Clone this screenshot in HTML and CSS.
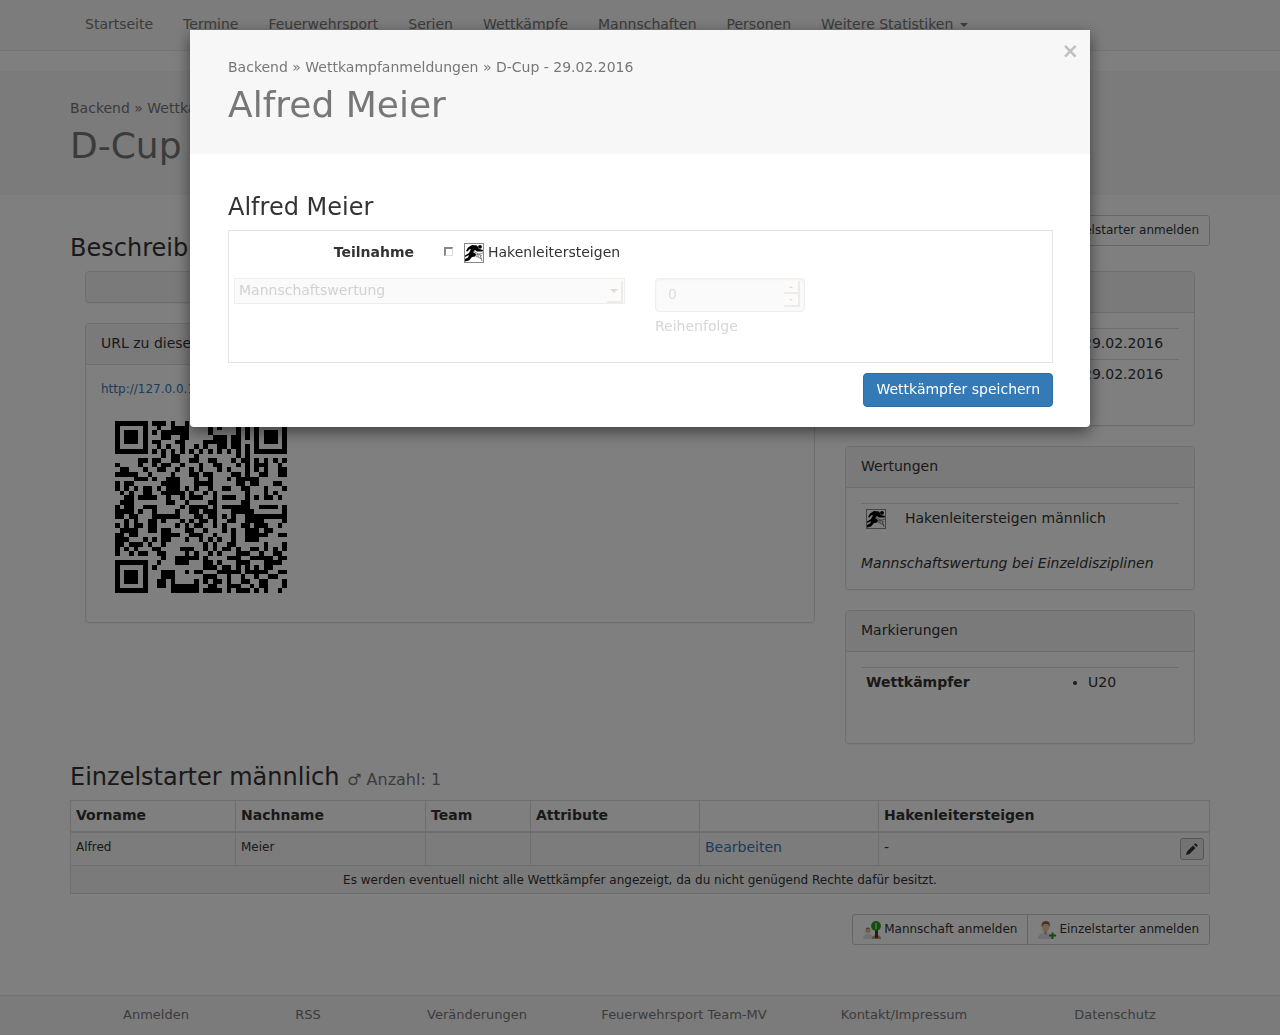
FILE: index.html
```html
<!DOCTYPE html>
<html lang="de">
<head>
<meta charset="utf-8">
<meta name="viewport" content="width=device-width, initial-scale=1">
<title>D-Cup - 29.02.2016</title>
<link rel="stylesheet" href="styles.css">
</head>
<body>
<svg class="sprite" aria-hidden="true">
  <symbol id="runner" viewBox="0 0 20 20">
    <rect x=".5" y=".5" width="19" height="19" fill="#fff" stroke="#888"/>
    <path d="M7 9 12 13 18 16M9 8 18 13M8 13 19 10M14 11v3M16 12 18 18" fill="none" stroke="#888" stroke-width="1"/>
    <circle cx="16" cy="3.800" r="1.900"/>
    <path d="M2 8 4 4.500 8 2 13 2.500 15 6 19 7 18.500 8.500 13 8.500 11 7 9 9 12 11 11 13.500 8 14 5 17.500 1 18.500 1 16 4 14.500 5 12 1 14 1 12.500 5 10 7 6 5 6.500 3.500 8.500Z"/>
  </symbol>
  <symbol id="team" viewBox="0 0 18 18">
    <path d="M0 18q0-5 5-5t5 5z" fill="#dde0e5"/><circle cx="5" cy="9.500" r="2.600" fill="#e5bd98"/><path d="M2.500 8.500q2.500-4 5 0l-2-1z" fill="#86613c"/>
    <path d="M9 18q0-4 4.500-4t4.500 4z" fill="#c09a6d"/><path d="M12 8h3v9h-3z" fill="#5b3825"/><circle cx="13" cy="5" r="4.900" fill="#269b20"/><path d="M12 2h2v6h-2z" fill="#8cd877"/>
  </symbol>
  <symbol id="person" viewBox="0 0 18 18">
    <path d="M0 18q0-6 7-6t7 6z" fill="#dfe1e6"/><path d="M6 9h3v4H6z" fill="#d9ad87"/><ellipse cx="7.500" cy="6" rx="3.500" ry="4.500" fill="#edc9a6"/><path d="M3.500 6Q3 0 8 0t3.500 6L10 3H6z" fill="#8b6646"/>
    <path d="M13.500 11.500h2v2h2.500v2h-2.500V18h-2v-2.500H11v-2h2.500z" fill="#29952b"/>
  </symbol>
</svg>

<nav class="navbar">
  <div class="container">
    <ul class="nav">
      <li><a href="#">Startseite</a></li>
      <li><a href="#">Termine</a></li>
      <li><a href="#">Feuerwehrsport</a></li>
      <li><a href="#">Serien</a></li>
      <li><a href="#">Wettkämpfe</a></li>
      <li><a href="#">Mannschaften</a></li>
      <li><a href="#">Personen</a></li>
      <li><a href="#">Weitere Statistiken <span class="caret"></span></a></li>
    </ul>
  </div>
</nav>

<header class="page-header">
  <div class="container">
    <p class="crumbs"><a href="#">Backend</a> » <a href="#">Wettkampfanmeldungen</a></p>
    <h1>D-Cup - 29.02.2016</h1>
  </div>
</header>

<main class="container">
  <div class="title-row">
    <h3>Beschreibung</h3>
    <div class="btn-group">
      <button type="button"><svg class="icon18"><use href="#team"/></svg> Mannschaft anmelden</button>
      <button type="button"><svg class="icon18"><use href="#person"/></svg> Einzelstarter anmelden</button>
    </div>
  </div>
  <div class="columns">
    <div class="col">
      <section class="panel strip"></section>
      <section class="panel">
        <h4>URL zu dieser Wettkampfanmeldung</h4>
        <div class="panel-body">
          <a class="url" href="#">http://127.0.0.1/</a>
          <svg class="qr" viewBox="0 0 43 43" shape-rendering="crispEdges" role="img" aria-label="QR-Code"><path id="qr-modules"/></svg>
        </div>
      </section>
    </div>
    <div class="col">
      <section class="panel">
        <h4>Informationen</h4>
        <div class="panel-body">
          <table class="facts dates">
            <tr><th>Datum</th><td>29.02.2016</td></tr>
            <tr><th>Meldeschluss</th><td>29.02.2016</td></tr>
          </table>
        </div>
      </section>
      <section class="panel">
        <h4>Wertungen</h4>
        <div class="panel-body">
          <table class="facts disciplines">
            <tr><td><svg class="icon20"><use href="#runner"/></svg></td><td>Hakenleitersteigen männlich</td></tr>
          </table>
          <em>Mannschaftswertung bei Einzeldisziplinen</em>
        </div>
      </section>
      <section class="panel">
        <h4>Markierungen</h4>
        <div class="panel-body">
          <table class="facts marks">
            <tr><th>Wettkämpfer</th><td><ul><li>U20</li></ul></td></tr>
          </table>
        </div>
      </section>
    </div>
  </div>

  <h3 class="list-title">Einzelstarter männlich <small>♂ Anzahl: 1</small></h3>
  <table class="starters">
    <colgroup><col class="c1"><col class="c2"><col class="c3"><col class="c4"><col class="c5"><col></colgroup>
    <thead><tr><th>Vorname</th><th>Nachname</th><th>Team</th><th>Attribute</th><th></th><th>Hakenleitersteigen</th></tr></thead>
    <tbody>
      <tr>
        <td class="small">Alfred</td><td class="small">Meier</td><td></td><td></td>
        <td><a href="#">Bearbeiten</a></td>
        <td><div class="result">- <button type="button" class="edit" aria-label="Bearbeiten"><svg viewBox="0 0 12 12"><path d="M0 12 1 8.500 7 2.500l2.500 2.500-6 6zM8 1.500l1-1h1l1.500 1.500v1l-1 1z"/></svg></button></div></td>
      </tr>
      <tr class="note"><td colspan="6">Es werden eventuell nicht alle Wettkämpfer angezeigt, da du nicht genügend Rechte dafür besitzt.</td></tr>
    </tbody>
  </table>
  <div class="actions">
    <div class="btn-group">
      <button type="button"><svg class="icon18"><use href="#team"/></svg> Mannschaft anmelden</button>
      <button type="button"><svg class="icon18"><use href="#person"/></svg> Einzelstarter anmelden</button>
    </div>
  </div>
</main>

<footer>
  <ul class="container">
    <li><a href="#">Anmelden</a></li>
    <li><a href="#">RSS</a></li>
    <li><a href="#">Veränderungen</a></li>
    <li><a href="#">Feuerwehrsport Team-MV</a></li>
    <li><a href="#">Kontakt/Impressum</a></li>
    <li><a href="#">Datenschutz</a></li>
  </ul>
</footer>

<div class="backdrop">
  <div class="modal" role="dialog" aria-modal="true" aria-labelledby="modal-title">
    <button type="button" class="close" aria-label="Schließen">×</button>
    <div class="modal-header">
      <p class="crumbs"><a href="#">Backend</a> » <a href="#">Wettkampfanmeldungen</a> » <a href="#">D-Cup - 29.02.2016</a></p>
      <h1 id="modal-title">Alfred Meier</h1>
    </div>
    <form class="modal-body">
      <h3>Alfred Meier</h3>
      <div class="box">
        <div class="participation">
          <strong>Teilnahme</strong>
          <label><input type="checkbox"><svg class="icon20"><use href="#runner"/></svg> Hakenleitersteigen</label>
        </div>
        <div class="options">
          <div class="select">
            <select disabled aria-label="Wertung"><option>Mannschaftswertung</option></select>
            <span class="arrow"><i class="down"></i></span>
          </div>
          <div class="order">
            <div class="number">
              <input id="order" type="number" value="0" disabled>
              <span class="spin"><span><i class="up"></i></span><span><i class="down"></i></span></span>
            </div>
            <label for="order">Reihenfolge</label>
          </div>
        </div>
      </div>
      <div class="submit"><button type="submit">Wettkämpfer speichern</button></div>
    </form>
  </div>
</div>
<script src="qr.js"></script>
</body>
</html>
```
FILE: styles.css
```css
* { box-sizing: border-box; }
body { margin: 0; font: 14px/20px "DejaVu Sans", sans-serif; color: #333; background: #fff; }
a { color: #337ab7; text-decoration: none; }
h1, h3, h4, p, ul { margin: 0; font-weight: 400; }
button, input, select { font-family: inherit; }
.sprite { display: none; }
.container { max-width: 1170px; margin: 0 auto; padding: 0 15px; }
.icon18 { width: 18px; height: 18px; flex: none; }
.icon20 { width: 20px; height: 20px; display: block; flex: none; }

.navbar { background: #f8f8f8; border-bottom: 1px solid #e7e7e7; margin-bottom: 20px; }
.nav { display: flex; flex-wrap: wrap; padding: 0; list-style: none; }
.nav a { display: block; padding: 14px 15px 16px; color: #777; }
.caret { display: inline-block; margin-left: 2px; border: 4px solid transparent; border-top-color: currentColor; border-bottom: 0; vertical-align: middle; }

.page-header, .modal-header { background: #f7f7f7; padding: 27px 0 29px; }
.crumbs, .crumbs a { color: #777; }
h1 { font-size: 36px; line-height: 40px; color: #777; margin-top: 8px; }
h3 { font-size: 24px; line-height: 26px; }

.title-row { display: flex; justify-content: space-between; align-items: flex-start; padding: 20px 0 25px; }
.title-row h3 { margin-top: 20px; height: 11px; }
.btn-group { display: flex; }
.btn-group button { display: flex; align-items: center; gap: 3px; height: 31px; padding: 0 10px 2px; font-size: 12px; line-height: 18px; color: #333; background: #fff; border: 1px solid #ccc; }
.btn-group button:first-child { border-radius: 3px 0 0 3px; }
.btn-group button:last-child { border-radius: 0 3px 3px 0; margin-left: -1px; }
.btn-group svg { margin-top: 3px; }

.columns { display: grid; grid-template-columns: 2fr 1fr; }
.col { padding: 0 15px; }
.panel { border: 1px solid #ddd; border-radius: 4px; margin-bottom: 20px; box-shadow: 0 1px 1px rgba(0,0,0,.05); }
.col:last-child .panel:last-child { margin-bottom: 0; }
.strip { height: 32px; background: #f5f5f5; }
.panel h4 { font-size: 14px; line-height: 20px; padding: 9px 15px 11px; background: #f5f5f5; border-bottom: 1px solid #ddd; border-radius: 3px 3px 0 0; }
.panel-body { padding: 15px; }
.panel-body em { display: block; line-height: 18px; padding-bottom: 2px; }
.url { display: block; font-size: 12px; line-height: 18px; margin-bottom: 9px; }
.qr { display: block; width: 200px; height: 200px; }

.facts { width: 100%; border-collapse: separate; border-spacing: 0; table-layout: fixed; margin-bottom: 20px; }
.facts th, .facts td { padding: 4px 5px 6px; border-top: 1px solid #ddd; text-align: left; vertical-align: top; }
.facts .icon20 { margin: 1px 0 -1px; }
.dates th { width: 217px; }
.disciplines td:first-child { width: 39px; }
.marks th { width: 182px; }
.marks ul { margin-bottom: 10px; padding-left: 40px; }

.list-title { margin: 20px 0 10px; }
.list-title small { font-size: 16px; line-height: 16px; color: #777; }
.starters { width: 100%; table-layout: fixed; border-collapse: collapse; border: 1px solid #ddd; }
.starters th, .starters td { border: 1px solid #ddd; padding: 4px 5px 6px; text-align: left; vertical-align: top; }
.starters th { border-bottom-width: 2px; }
.starters tbody tr { background: #f9f9f9; }
.starters .small { font-size: 12px; }
.starters .note { background: #f5f5f5; }
.starters .note td { font-size: 12px; line-height: 17px; padding: 6px 5px 4px; text-align: center; }
.c1 { width: 165px; } .c2 { width: 190px; } .c3 { width: 105px; } .c4 { width: 169px; } .c5 { width: 179px; }
.result { display: flex; justify-content: space-between; }
.edit { width: 24px; height: 22px; margin-top: 1px; padding: 0; border: 1px solid #adadad; border-radius: 3px; background: #e6e6e6; display: grid; place-items: center; }
.result { margin-bottom: -1px; }
.edit svg { width: 12px; height: 12px; fill: #333; }
.actions { display: flex; justify-content: flex-end; padding: 20px 0 50px; }

footer { background: #f7f7f7; border-top: 1px solid #e7e7e7; font-size: 13px; }
footer ul { display: grid; grid-template-columns: 172fr 132fr 206fr 208fr 232fr 190fr; list-style: none; text-align: center; }
footer a { display: block; padding: 9px 0 10px; color: #777; white-space: nowrap; }

.backdrop { position: fixed; inset: 0; padding: 30px 10px; background: rgba(0,0,0,.5); overflow: auto; }
.modal { position: relative; max-width: 900px; margin: 0 auto; background: #fff; border-radius: 4px; box-shadow: 0 5px 15px rgba(0,0,0,.5); }
.modal-header { padding-left: 38px; padding-right: 38px; }
.close { position: absolute; top: 11px; right: 11px; border: 0; padding: 0; background: none; color: #c0c0c0; font-size: 21px; line-height: 21px; font-weight: 700; }
.modal-body { padding: 40px 37px 20px 38px; }
.box { border: 1px solid #e3e3e3; margin: 10px 0; padding: 12px 5px 26px; }
.participation { display: flex; gap: 30px; margin-bottom: 15px; }
.participation strong { width: 180px; text-align: right; line-height: 18px; }
.participation label { display: flex; gap: 4px; line-height: 18px; }
.participation input { appearance: none; width: 9px; height: 9px; margin: 4px 7px 0 0; border: 1px solid #ddd; border-top: 2px solid #888; border-left: 2px solid #888; background: #fff; }
.options { display: flex; gap: 30px; }
.select { flex: 0 1 391px; height: 26px; display: flex; padding: 2px 1px 1px 4px; border: 1px solid #eee; background: #fafafa; }
.select select { appearance: none; flex: 1; min-width: 0; padding: 0; border: 0; background: none; color: #d2d2d2; font-size: 14px; line-height: 18px; opacity: 1; height: 18px; }
.arrow, .spin span { display: grid; place-items: center; width: 16px; background: #fcfbfa; border-right: 2px solid #eeecea; border-bottom: 2px solid #eeecea; }
.arrow { height: 22px; }
.down, .up { border: 4px solid transparent; border-bottom: 0; border-top-color: #ddd; }
.up { border-top: 0; border-bottom: 2px solid #ddd; border-left-width: 2px; border-right-width: 2px; }
.spin .down { border-width: 2px 2px 0; }
.number { width: 150px; height: 34px; display: flex; padding: 2px 4px 4px 12px; background: #fafafa; border: 1px solid #eee; border-radius: 4px; box-shadow: inset 0 1px 2px #f1f1f1; }
.number input { appearance: textfield; flex: 1; min-width: 0; padding: 0; border: 0; background: none; font-size: 14px; color: #ddd; }
.number input::-webkit-inner-spin-button { appearance: none; }
.spin { display: grid; grid-template-rows: 1fr 1fr; }
.order label { display: block; margin-top: 4px; color: #d6d6d6; }
.submit { display: flex; justify-content: flex-end; }
.submit button { height: 34px; padding: 0 12px 2px; color: #fff; background: #337ab7; border: 1px solid #2e6da4; border-radius: 4px; font-size: 14px; line-height: 20px; }
```
FILE: qr.js
```js
// One string per module row; "#" marks a dark module.
const rows = [
  "#######.###.#..#......#.#.#...#######",
  "#.....#..#..####....#.#...#.#.#.....#",
  "#.###.#.#.######....#.....#.#.#.###.#",
  "#.###.#...##..##.....###.##.#.#.###.#",
  "#.###.#.##...##....#####.##...#.###.#",
  "#.....#..#.#..#..#.#..##.##.#.#.....#",
  "#######.#.#.#.#.#.#.#.#.#.#.#.#######",
  "..........#.##...#........#.#........",
  ".....##.##..##..##..##...#.##.#.#.#.#",
  "#....#..#.##..#...#..##...#.#.###..#.",
  ".##...#..##..#..#.#...#.#...#.#.#..##",
  "#####..#....#...##.##....##.#..##..##",
  "....###.#..###...#..#...#.#####......",
  "#.##......####...####.....##.##...##.",
  "#.#.#.##.#.###.#.#..#..##..##...#...#",
  ".#.#..##..#####.#..#.#......#...#.#..",
  "..##.####..#..#.###..#.###..#.#.##.#.",
  ".###.......##..#....##.....##........",
  "#.##..###.....#.####.#.######..####.#",
  "####.#..#....#..##.###...#####......#",
  "##.##...######...##.##.#.#..#########",
  "..#.#..##.#...#.#.##.#..##..####....#",
  "#.#.##.##....#.#.##..#.#...##.###..#.",
  ".####..##.##...##..#...#.#..###.##...",
  "##.##.....####..###..#...#..#####..##",
  "###...#.#.##...#..#.#.#..#..###......",
  "##.###.#..#........#.#..##......#...#",
  "#.#.#...##....###..#.#.##.#..##.#.#.#",
  "#..#.##..##....#.#..#.#...###..#..##.",
  "..........#..#####.#....###..#####.##",
  "#######..#...###...##.#...###...####.",
  "#.....#.#..........###.##.#.#.#.##...",
  "#.###.#...###..#.##...#####.#####..##",
  "#.###.#...###......###..#..#..#..##..",
  "#.###.#..##.#....#.#.##.#..##..##...#",
  "#.....#..##.######..##..###..#.##...#",
  "#######.....######.####.#.###.#.#..#."
];
document.getElementById("qr-modules").setAttribute("d",
  rows.flatMap((row, y) => [...row].map((c, x) => c === "#" ? `M${x + 3} ${y + 3}h1v1h-1z` : "")).join(""));
```
